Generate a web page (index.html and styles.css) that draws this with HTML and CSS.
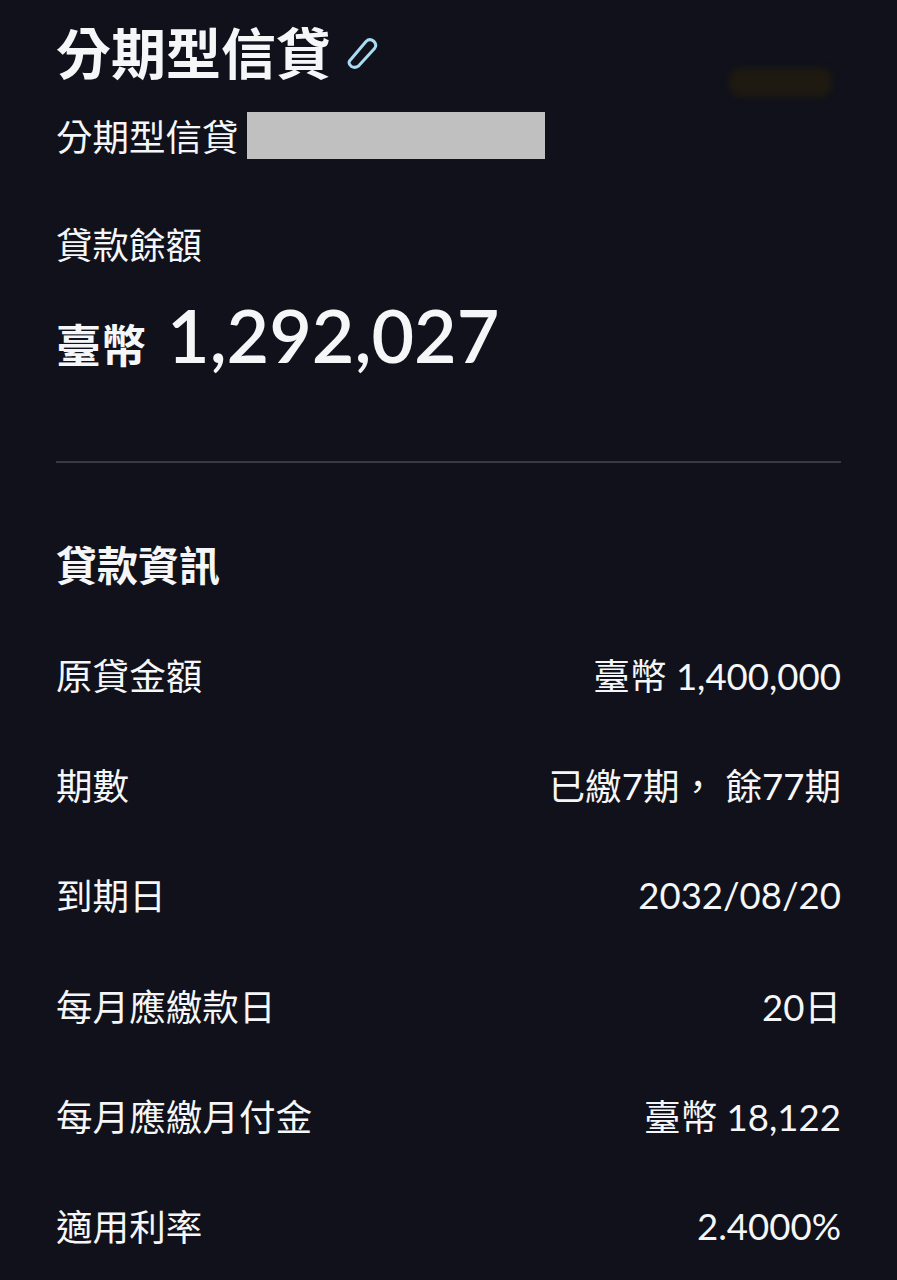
FILE: index.html
```html
<!DOCTYPE html>
<html lang="zh-Hant">
<head>
<meta charset="UTF-8">
<meta name="viewport" content="width=device-width, initial-scale=1.0">
<title>分期型信貸</title>
<link rel="stylesheet" href="styles.css">
</head>
<body>
<div class="page">
  <div class="smudge"></div>

  <div class="title-row">
    <h1 class="title">分期型信貸</h1>
    <svg class="edit-icon" width="34" height="34" viewBox="0 0 34 34" fill="none">
      <path d="M3.5 25 L20 5.5 Q23.5 2 27.5 5 Q31.5 8.5 28.5 12.5 L12.5 30 Q9 32.5 5.5 30.5 Q2 28 3.5 25 Z" stroke="#a9dcf3" stroke-width="3" stroke-linejoin="round"/>
    </svg>
  </div>

  <div class="account-row">
    <span class="account-name">分期型信貸</span>
    <span class="redacted"></span>
  </div>

  <div class="balance-label">貸款餘額</div>
  <div class="balance">
    <span class="currency">臺幣</span>
    <span class="amount">1,292,027</span>
  </div>

  <hr class="divider">

  <h2 class="section-title">貸款資訊</h2>

  <div class="info-list">
    <div class="info-row"><span>原貸金額</span><span>臺幣 1,400,000</span></div>
    <div class="info-row"><span>期數</span><span>已繳7期， 餘77期</span></div>
    <div class="info-row"><span>到期日</span><span>2032/08/20</span></div>
    <div class="info-row"><span>每月應繳款日</span><span>20日</span></div>
    <div class="info-row"><span>每月應繳月付金</span><span>臺幣 18,122</span></div>
    <div class="info-row"><span>適用利率</span><span>2.4000%</span></div>
  </div>
</div>
</body>
</html>
```

FILE: styles.css
```css
html, body {
  margin: 0;
  padding: 0;
  background-color: #10111a;
}
body {
  font-family: Lato, "Noto Sans CJK TC", sans-serif;
  color: #f5f6f8;
}
.page {
  position: relative;
  height: 1280px;
  overflow: hidden;
  padding: 21px 56px 0 56px;
  box-sizing: border-box;
}
.smudge {
  position: absolute;
  left: 729px;
  top: 68px;
  width: 103px;
  height: 29px;
  border-radius: 12px;
  background-color: #1e1a11;
  filter: blur(3px);
}
.title-row {
  display: flex;
  align-items: center;
  gap: 15px;
  height: 64px;
}
.title {
  margin: 0;
  font-size: 55px;
  line-height: 64px;
  font-weight: 700;
}
.edit-icon {
  flex: none;
}
.account-row {
  display: flex;
  align-items: center;
  gap: 8px;
  height: 48px;
  margin-top: 26px;
  font-size: 36.5px;
}
.redacted {
  width: 298px;
  height: 47px;
  background-color: #c0c0c0;
}
.balance-label {
  margin-top: 61px;
  font-size: 36.5px;
  line-height: 50px;
}
.balance {
  display: flex;
  align-items: baseline;
  gap: 21px;
  margin-top: 25px;
  height: 80px;
}
.currency {
  font-size: 45px;
  font-weight: 700;
}
.amount {
  font-size: 73.5px;
  line-height: 80px;
  font-weight: 600;
}
.divider {
  margin: 86px 0 0 0;
  border: none;
  height: 2px;
  background-color: #383a42;
}
.section-title {
  margin: 75px 0 0 0;
  font-size: 41px;
  line-height: 56px;
  font-weight: 700;
}
.info-list {
  margin-top: 55px;
  display: flex;
  flex-direction: column;
  gap: 60.4px;
}
.info-row {
  display: flex;
  justify-content: space-between;
  align-items: center;
  height: 50px;
  font-size: 36.6px;
}
```
